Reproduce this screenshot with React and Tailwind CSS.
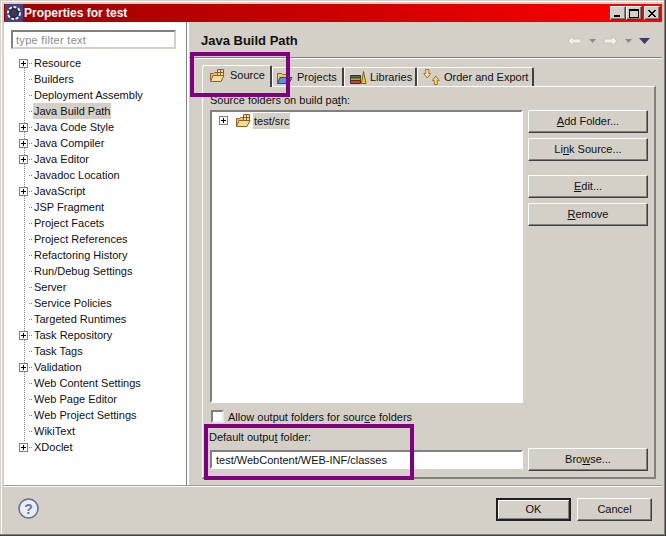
import React from 'react';

const treeItems = [
  ['Resource', true], ['Builders'], ['Deployment Assembly'], ['Java Build Path', false, true],
  ['Java Code Style', true], ['Java Compiler', true], ['Java Editor', true], ['Javadoc Location'],
  ['JavaScript', true], ['JSP Fragment'], ['Project Facets'], ['Project References'],
  ['Refactoring History'], ['Run/Debug Settings'], ['Server'], ['Service Policies'],
  ['Targeted Runtimes'], ['Task Repository', true], ['Task Tags'], ['Validation', true],
  ['Web Content Settings'], ['Web Page Editor'], ['Web Project Settings'], ['WikiText'], ['XDoclet', true],
];

const bevel = 'border border-t-white border-l-white border-r-[#404040] border-b-[#404040] shadow-[inset_-1px_-1px_0_#808080]';
const sunken = 'border-2 border-t-[#808080] border-l-[#808080] border-r-white border-b-white';

const Expander = () => (
  <svg width="9" height="9" viewBox="0 0 9 9" className="shrink-0 bg-white">
    <rect x="0.5" y="0.5" width="8" height="8" fill="none" stroke="#808080" />
    <path d="M2 4.5h5M4.5 2v5" stroke="#000" />
  </svg>
);

const FolderPkg = () => (
  <svg width="17" height="15" viewBox="0 0 17 15" className="shrink-0">
    <path d="M1.5 5.5h3l1-1h3v8h-7z" fill="#e8c070" stroke="#8a6420" />
    <path d="M1.5 13.5l2.500-6h11l-3 6z" fill="#f6dc98" stroke="#8a6420" />
    <path d="M8.500 1.500h6v6h-6zM11.500 1.500v6M8.500 4.500h6" fill="#f3e2b0" stroke="#8a5a20" />
  </svg>
);

const FolderBlue = () => (
  <svg width="17" height="15" viewBox="0 0 17 15" className="shrink-0">
    <path d="M1.500 3.500h4l1 1h5v8h-10z" fill="#e8c878" stroke="#8a6420" />
    <path d="M1.500 13.500l2.500-6h12l-3 6z" fill="#5c8fe0" stroke="#24478c" />
  </svg>
);

const Books = () => (
  <svg width="17" height="15" viewBox="0 0 17 15" className="shrink-0">
    <path d="M0.500 5.500h10v2.500h-10z" fill="#2f7d5c" stroke="#1c3f3a" />
    <path d="M0.500 8h10v2.500h-10z" fill="#c9a030" stroke="#5c4a18" />
    <path d="M0.500 10.500h10v3h-10z" fill="#b84a30" stroke="#5c2418" />
    <path d="M11.500 13.500l2-12 2.500 12z" fill="#f0c840" stroke="#7a6018" />
  </svg>
);

const UpDown = () => (
  <svg width="17" height="16" viewBox="0 0 22 16" preserveAspectRatio="none" className="shrink-0">
    <path d="M3.500 0.500h4v4h2.500l-4.500 4.500-4.500-4.500h2.500z" fill="#f4e3a8" stroke="#8a6a20" />
    <path d="M14.500 15.500h4v-4h2.500l-4.500-4.500-4.500 4.500h2.500z" fill="#f4d878" stroke="#8a6a20" />
  </svg>
);

const NavArrow = ({ flip }) => (
  <svg width="15" height="12" viewBox="0 0 15 12" className={flip ? 'scale-x-[-1]' : ''}>
    <path d="M1 6l5-5v3h8v4h-8v3z" fill="#f0eee8" stroke="#c8c5bd" />
  </svg>
);

const Caret = ({ dark }) => (
  <svg width={dark ? 11 : 7} height={dark ? 6 : 4} viewBox={dark ? '0 0 11 6' : '0 0 7 4'}>
    <path d={dark ? 'M0 0h11l-5.500 6z' : 'M0 0h7l-3.500 4z'} fill={dark ? '#3c3a66' : '#8c8a94'} />
  </svg>
);

const PushButton = ({ className = '', children }) => (
  <button className={`flex items-center justify-center pb-[1px] bg-[#d4d0c8] ${bevel} ${className}`}>{children}</button>
);

const Tab = ({ icon, label, active, className = '' }) => (
  <div
    className={`flex items-center whitespace-nowrap border-t border-l border-r-2 border-t-white border-l-white border-r-[#404040] rounded-tl-[2px] rounded-tr-[2px] bg-[#d4d0c8] ${
      active ? 'h-[22px] -mb-px pb-[3px] z-10' : 'h-[19px]'
    } ${className}`}
  >
    {icon}
    <span>{label}</span>
  </div>
);

export default function App() {
  return (
    <div
      className="relative w-[666px] h-[536px] overflow-hidden bg-[#d4d0c8] text-[11px] leading-4 text-[#101010] flex flex-col shadow-[inset_-1px_-1px_0_#404040,inset_-2px_-2px_0_#808080,inset_1px_1px_0_#d4d0c8,inset_2px_2px_0_#ffffff]"
      style={{ fontFamily: '"Liberation Sans", "DejaVu Sans", sans-serif' }}
    >
      <div className="flex-1 min-h-0 flex flex-col mx-[4px] mt-[4px] mb-[3px]">
        {/* Title bar */}
        <div className="h-[18px] shrink-0 flex items-center bg-gradient-to-r from-[#9c0000] to-[#ff0000]">
          <svg width="18" height="18" viewBox="0 0 18 18" className="shrink-0 ml-[1px]">
            <rect width="18" height="18" fill="#4a3f74" />
            <circle cx="9" cy="9" r="6" fill="#272742" stroke="#e8e8f0" strokeWidth="2" strokeDasharray="3 1.500" />
            <circle cx="9" cy="9" r="3.500" fill="#3a3a60" />
          </svg>
          <span className="ml-[1px] font-bold text-white text-[12px]">Properties for test</span>
          <div className="ml-auto flex mr-[2px]">
            <div className={`w-[16px] h-[14px] flex items-end pl-[3px] pb-[2px] bg-[#d4d0c8] ${bevel}`}>
              <div className="w-[6px] h-[2px] bg-black" />
            </div>
            <div className={`w-[16px] h-[14px] flex items-center justify-center bg-[#d4d0c8] ${bevel}`}>
              <div className="w-[10px] h-[9px] border border-t-2 border-black" />
            </div>
            <div className={`ml-[2px] w-[16px] h-[14px] flex items-center justify-center bg-[#d4d0c8] ${bevel}`}>
              <svg width="8" height="7" viewBox="0 0 8 7">
                <path d="M0 0l7 7M1 0l7 7M7 0l-7 7M8 0l-7 7" stroke="#000" />
              </svg>
            </div>
          </div>
        </div>

        <div className="flex-1 min-h-0 flex">
          {/* Left tree */}
          <div className="w-[183px] shrink-0 bg-white border-r border-r-[#808080] pt-[8px] flex flex-col">
            <div className="ml-[7px] mr-[10px] h-[19px] border-2 border-t-[#808080] border-l-[#808080] border-r-[#d4d0c8] border-b-[#d4d0c8] pl-[3px] text-[#8c8c8c] tracking-[0.3px] flex items-center">
              type filter text
            </div>
            <div className="relative mt-[6px] pl-[15px]">
              <div className="absolute left-[20px] top-[10px] h-[376px] border-l border-dotted border-[#808080]" />
              {treeItems.map(([label, expandable, selected]) => (
                <div key={label} className="relative h-4 flex items-center">
                  <div className="w-[9px] flex justify-center">{expandable && <Expander />}</div>
                  <div className="w-[3px] ml-px border-t border-dotted border-[#808080]" />
                  <span className={`ml-px px-[1px] ${selected ? 'bg-[#d4d0c8]' : ''}`}>{label}</span>
                </div>
              ))}
            </div>
          </div>

          {/* Right page */}
          <div className="flex-1 min-w-0 border-l-2 border-l-[#ffffff] flex flex-col pl-[13px] pr-[6px]">
            <div className="h-[36px] shrink-0 -ml-[13px] -mr-[6px] pl-[12px] pr-[12px] pt-[3px] flex items-center justify-between border-b border-b-[#808080] shadow-[0_1px_0_#fff]">
              <span className="font-bold text-[13px] text-[#101010]">Java Build Path</span>
              <div className="flex items-center gap-[7px]">
                <NavArrow />
                <Caret />
                <NavArrow flip />
                <Caret />
                <Caret dark />
              </div>
            </div>

            <div className="flex items-end h-[28px] shrink-0">
              <Tab active icon={<FolderPkg />} label="Source" className="w-[70px] pl-[6px] gap-[4px] mb-[-1px]" />
              <Tab icon={<FolderBlue />} label="Projects" className="w-[72px] pl-[3px] gap-[4px]" />
              <Tab icon={<Books />} label="Libraries" className="w-[73px] pl-[5px] gap-[3px]" />
              <Tab icon={<UpDown />} label="Order and Export" className="w-[117px] pl-[5px] gap-[4px]" />
            </div>

            <div className="flex-1 min-h-0 border-t border-l border-t-white border-l-white border-r-2 border-b-2 border-r-[#808080] border-b-[#808080] pt-[5px] pl-[7px] pr-[6px] pb-[6px] flex flex-col">
              <div className="h-[16px] shrink-0">Source folders on build pa<span className="underline">t</span>h:</div>
              <div className="flex-1 min-h-0 flex gap-[5px] mt-[2px]">
                <div className={`w-[313px] bg-white ${sunken} pl-[7px]`}>
                  <div className="flex items-center h-[17px]">
                    <Expander />
                    <span className="ml-[7px]"><FolderPkg /></span>
                    <span className="ml-[1px] px-[1px] bg-[#d4d0c8]">test/src</span>
                  </div>
                </div>
                <div className="flex-1 flex flex-col">
                  <PushButton className="h-[23px]"><span><span className="underline">A</span>dd Folder...</span></PushButton>
                  <PushButton className="h-[23px] mt-[5px]"><span>Li<span className="underline">n</span>k Source...</span></PushButton>
                  <PushButton className="h-[23px] mt-[14px]"><span><span className="underline">E</span>dit...</span></PushButton>
                  <PushButton className="h-[23px] mt-[5px]"><span><span className="underline">R</span>emove</span></PushButton>
                </div>
              </div>

              <div className="flex items-center mt-[7px] h-[13px] shrink-0 pl-[1px]">
                <div className="w-[13px] h-[13px] bg-white border-2 border-t-[#808080] border-l-[#808080] border-r-[#e8e8e8] border-b-[#e8e8e8]" />
                <span className="ml-[4px]">Allow output folders for sour<span className="underline">c</span>e folders</span>
              </div>
              <div className="mt-[6px] h-[16px] -ml-px shrink-0">Default outpu<span className="underline">t</span> folder:</div>
              <div className="mt-[3px] shrink-0 flex items-center gap-[5px]">
                <div className={`w-[313px] h-[19px] bg-white ${sunken} pl-[4px] flex items-center`}>test/WebContent/WEB-INF/classes</div>
                <PushButton className="flex-1 h-[23px]"><span>Bro<span className="underline">w</span>se...</span></PushButton>
              </div>
            </div>
            <div className="h-[6px] shrink-0" />
          </div>
        </div>

        {/* Footer */}
        <div className="h-[48px] shrink-0 border-t border-t-[#a09c94] shadow-[inset_0_1px_0_#fff] flex items-center pl-[14px] pr-[10px]">
          <svg width="21" height="21" viewBox="0 0 21 21" className="shrink-0 mb-[3px]">
            <circle cx="10.500" cy="10.500" r="9.500" fill="#e9edf4" stroke="#5a6e96" strokeWidth="1.500" />
            <text x="10.500" y="15.500" textAnchor="middle" fontSize="14" fontWeight="700" fill="#66779c" fontFamily="Liberation Sans, sans-serif">?</text>
          </svg>
          <div className="ml-auto flex gap-[6px]">
            <button className={`w-[75px] h-[23px] pb-[1px] flex items-center justify-center bg-[#d4d0c8] border-2 border-[#202020] shadow-[inset_1px_1px_0_#fff,inset_-1px_-1px_0_#808080]`}>OK</button>
            <PushButton className="w-[75px] h-[23px]">Cancel</PushButton>
          </div>
        </div>
      </div>

      {/* annotation boxes drawn over the screenshot */}
      <div className="absolute left-[190px] top-[52px] w-[100px] h-[45px] border-[4px] border-[#800080] pointer-events-none" />
      <div className="absolute left-[204px] top-[424px] w-[210px] h-[56px] border-[4px] border-[#800080] pointer-events-none" />
    </div>
  );
}
